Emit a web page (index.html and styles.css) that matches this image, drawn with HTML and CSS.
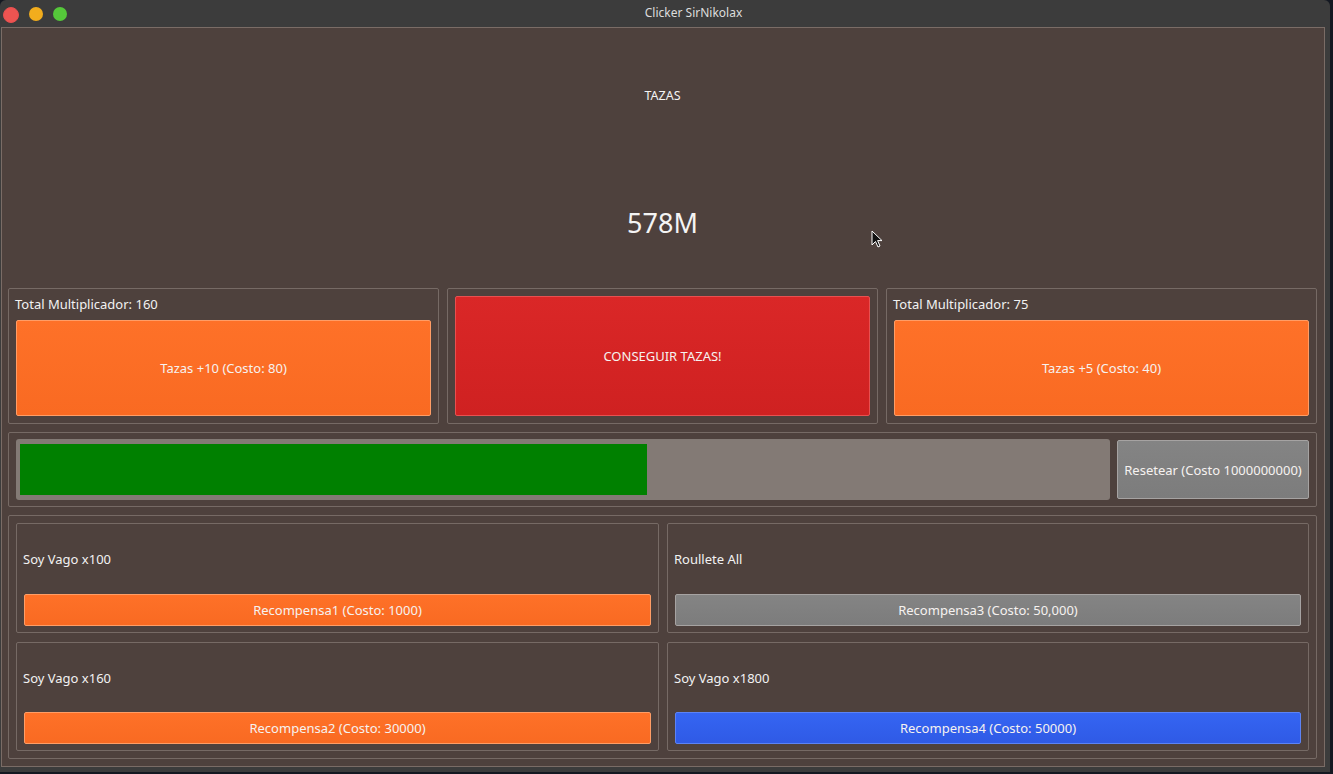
FILE: index.html
```html
<!DOCTYPE html>
<html>
<head>
<meta charset="utf-8">
<link rel="stylesheet" href="styles.css">
</head>
<body>
<div class="window">
  <div class="titlebar">
    <div class="lights">
      <span class="light red"></span>
      <span class="light yellow"></span>
      <span class="light green"></span>
    </div>
    <div class="title">Clicker SirNikolax</div>
  </div>
  <div class="content">
    <div class="hero">
      <div class="hero-label">TAZAS</div>
      <div class="hero-value">578M</div>
    </div>
    <div class="row1">
      <div class="group">
        <div class="glabel">Total Multiplicador: 160</div>
        <button class="btn orange big">Tazas +10 (Costo: 80)</button>
      </div>
      <div class="group">
        <button class="btn red bigred">CONSEGUIR TAZAS!</button>
      </div>
      <div class="group">
        <div class="glabel">Total Multiplicador: 75</div>
        <button class="btn orange big">Tazas +5 (Costo: 40)</button>
      </div>
    </div>
    <div class="row2 group">
      <div class="progress"><div class="chunk" style="width:57.75%"></div></div>
      <button class="btn gray reset">Resetear (Costo 1000000000)</button>
    </div>
    <div class="row3 group">
      <div class="card">
        <div class="clabel">Soy Vago x100</div>
        <button class="btn orange small">Recompensa1 (Costo: 1000)</button>
      </div>
      <div class="card">
        <div class="clabel">Roullete All</div>
        <button class="btn gray small">Recompensa3 (Costo: 50,000)</button>
      </div>
      <div class="card">
        <div class="clabel">Soy Vago x160</div>
        <button class="btn orange small">Recompensa2 (Costo: 30000)</button>
      </div>
      <div class="card">
        <div class="clabel">Soy Vago x1800</div>
        <button class="btn blue small">Recompensa4 (Costo: 50000)</button>
      </div>
    </div>
    <svg class="cursor" width="12" height="18" viewBox="0 0 12 18">
      <path d="M1 1 L1 15 L4.5 11.5 L7 17 L9 16 L6.6 10.6 L11 10.6 Z" fill="#111" stroke="#fff" stroke-width="1"/>
    </svg>
  </div>
</div>
</body>
</html>
```

FILE: styles.css
```css
html, body {
  margin: 0;
  padding: 0;
  background: #141821;
  width: 1333px;
  height: 774px;
  overflow: hidden;
  font-family: "Noto Sans", "Open Sans", sans-serif;
}

.window {
  width: 1330px;
  height: 772px;
  background: #3c3c3c;
  border-radius: 6px 6px 0 0;
  display: flex;
  flex-direction: column;
}

.titlebar {
  height: 27px;
  position: relative;
  display: flex;
  align-items: center;
  justify-content: center;
  flex: none;
}

.lights {
  position: absolute;
  left: 3px;
  top: 7px;
  display: flex;
  gap: 10px;
}

.light {
  width: 14px;
  height: 14px;
  border-radius: 50%;
  display: block;
}
.light.red { background: #ee5451; }
.light.yellow { background: #f2ad1d; }
.light.green { background: #55c83a; }

.title {
  color: #dcdcdc;
  font-size: 12px;
  margin-left: 57px;
  margin-top: -2px;
}

.content {
  position: relative;
  margin-left: 1px;
  width: 1309px;
  height: 738px;
  border: 1px solid #7a6c66;
  background: #4e413d;
  padding: 0 7px 0 6px;
  box-sizing: content-box;
  display: flex;
  flex-direction: column;
}

.hero {
  height: 260px;
  display: flex;
  flex-direction: column;
  color: #f4f4f4;
  flex: none;
}

.hero-label {
  height: 130px;
  box-sizing: border-box;
  padding-top: 4px;
  display: flex;
  align-items: center;
  justify-content: center;
  font-size: 12.5px;
}

.hero-value {
  height: 130px;
  box-sizing: border-box;
  padding-bottom: 2px;
  display: flex;
  align-items: center;
  justify-content: center;
  font-size: 27px;
}

.group {
  border: 1px solid #766a65;
  border-radius: 2px;
  box-sizing: border-box;
}

.row1 {
  display: grid;
  grid-template-columns: 1fr 1fr 1fr;
  gap: 8px;
  height: 136px;
  flex: none;
}

.row1 .group {
  display: flex;
  flex-direction: column;
  padding: 7px;
}

.glabel {
  color: #f2f2f2;
  font-size: 13px;
  line-height: 16px;
  height: 16px;
  margin: 0 0 8px -1px;
}

.btn {
  font-family: "Noto Sans", "Open Sans", sans-serif;
  font-size: 13px;
  color: #f6f2f0;
  border-radius: 2px;
  box-sizing: border-box;
  padding: 0;
  margin: 0;
  cursor: default;
}

.orange {
  background: linear-gradient(#fe7128, #f96a22);
  border: 1px solid #ff9d66;
}
.red {
  background: linear-gradient(#da2727, #cf2121);
  border: 1px solid #e85050;
}
.gray {
  background: linear-gradient(#848484, #7c7c7c);
  border: 1px solid #a6a3a2;
}
.blue {
  background: linear-gradient(#3565f2, #2f5ae6);
  border: 1px solid #5c83f6;
}

.big {
  height: 96px;
  width: 100%;
}

.bigred {
  height: 120px;
  width: 100%;
}

.row2 {
  margin-top: 8px;
  height: 75px;
  display: flex;
  gap: 7px;
  padding: 6px 7px;
  align-items: center;
  flex: none;
}

.progress {
  flex: 1;
  height: 61px;
  background: #837a75;
  border-radius: 3px;
  padding: 5px 4px;
  box-sizing: border-box;
}

.chunk {
  height: 100%;
  background: #008000;
}

.reset {
  width: 192px;
  height: 59px;
  flex: none;
}

.row3 {
  margin-top: 8px;
  height: 244px;
  display: grid;
  grid-template-columns: 643px 642px;
  grid-template-rows: 110px 109px;
  column-gap: 8px;
  row-gap: 9px;
  padding: 7px;
  flex: none;
}

.card {
  border: 1px solid #766a65;
  border-radius: 2px;
  box-sizing: border-box;
  display: flex;
  flex-direction: column;
  padding: 0 7px 6px 7px;
}

.clabel {
  flex: 1;
  display: flex;
  align-items: center;
  color: #f2f2f2;
  font-size: 13px;
  margin-left: -1px;
}

.small {
  height: 32px;
  width: 100%;
}

.cursor {
  position: absolute;
  left: 869px;
  top: 202px;
}
```
